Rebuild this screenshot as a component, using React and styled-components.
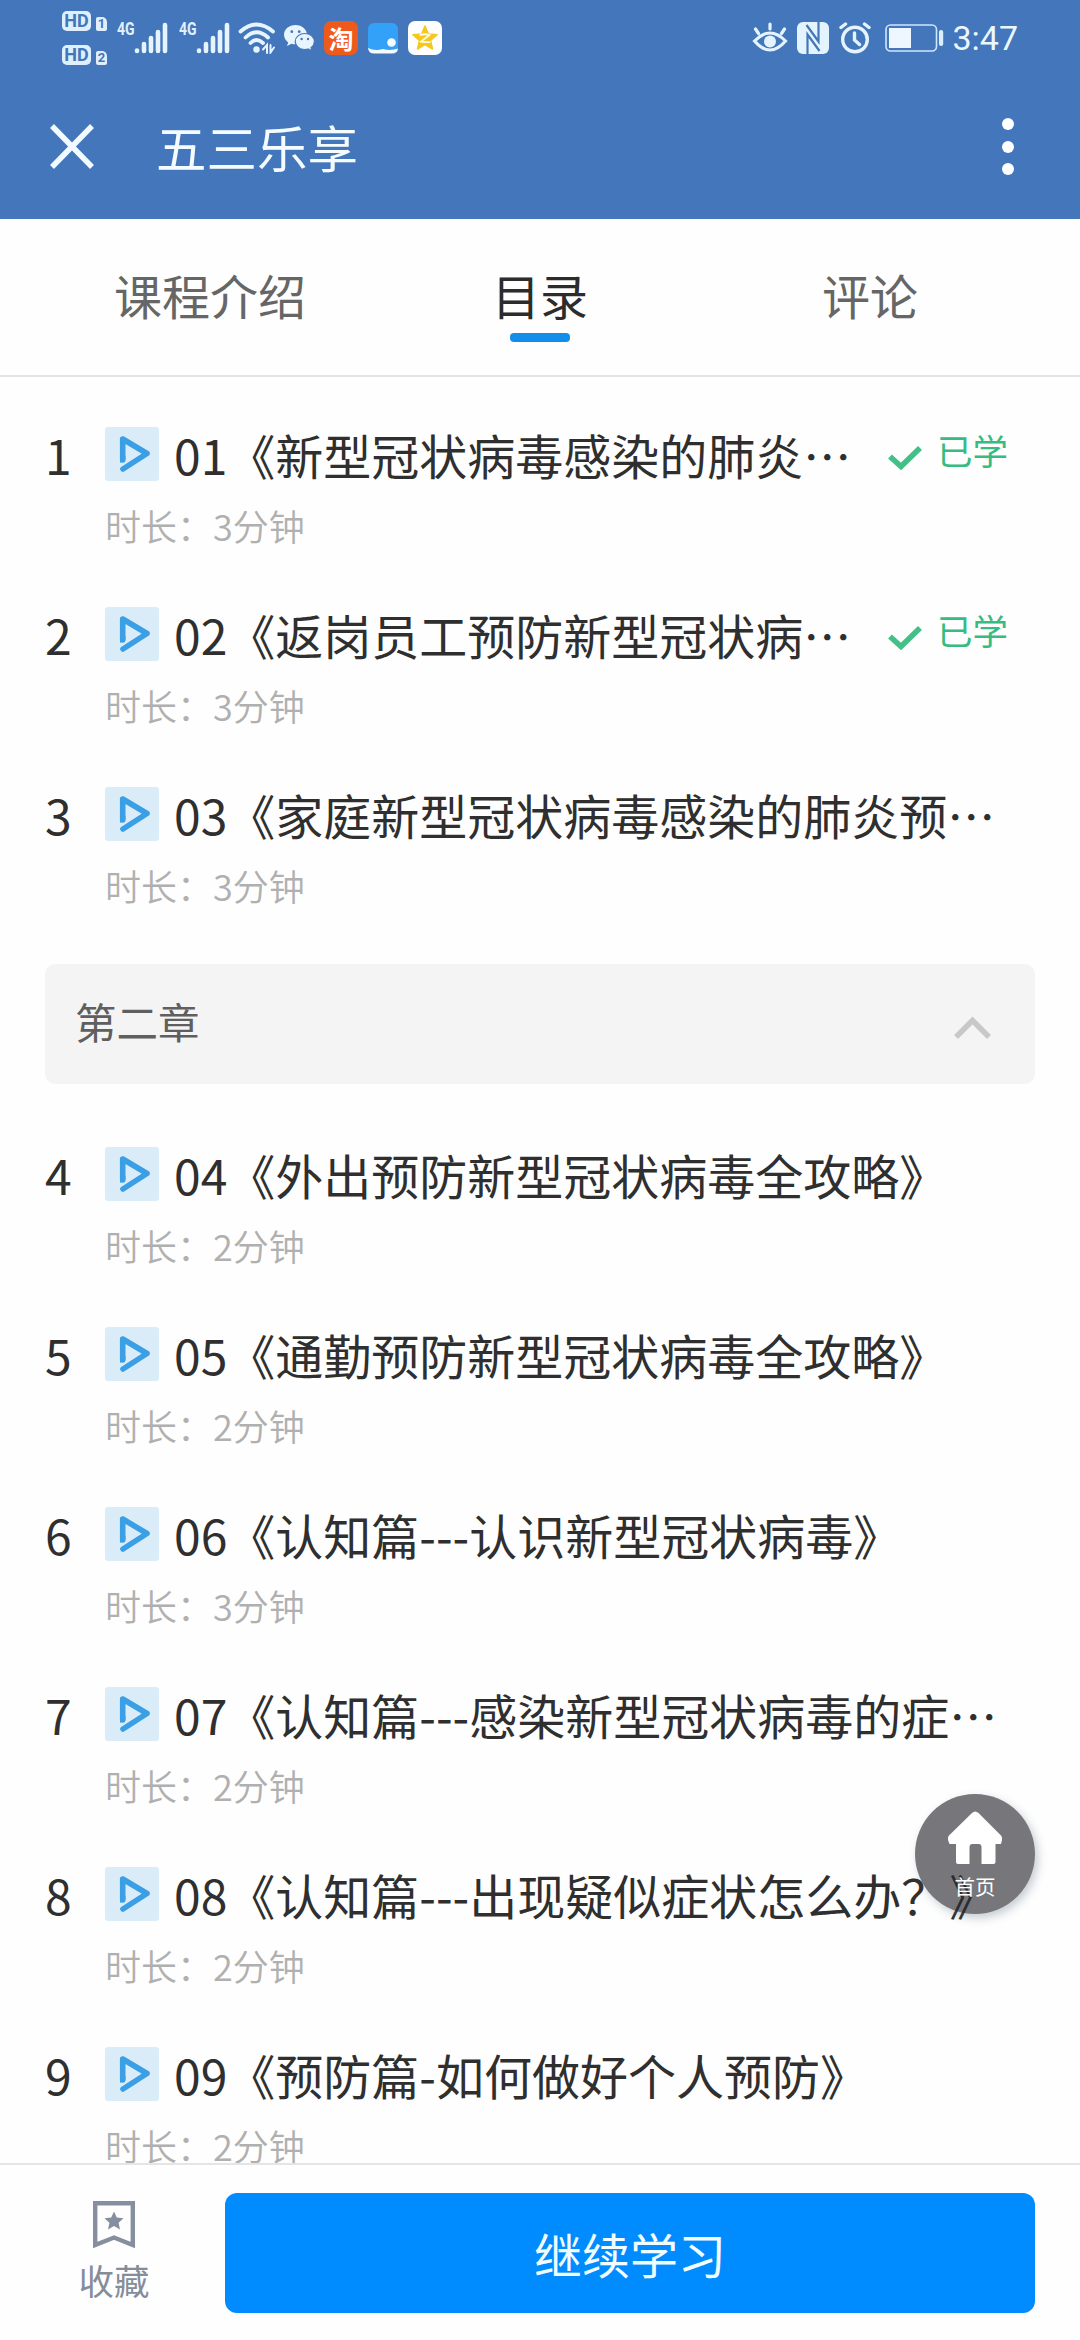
import { useState } from "react";
import styled, { createGlobalStyle } from "styled-components";

const GlobalStyle = createGlobalStyle`
  * {
    box-sizing: border-box;
  }

  body {
    margin: 0;
    background: #fefefe;
    font-family: "Noto Sans CJK SC", "Noto Sans", sans-serif;
    text-spacing-trim: space-all;
  }
`;

const Page = styled.div`
  position: relative;
  display: flex;
  flex-direction: column;
  width: 1080px;
  height: 2340px;
  overflow: hidden;
  background: #fefefe;
`;

const Header = styled.header`
  flex: none;
  height: 219px;
  color: #f4fcff;
  background: #4376ba;
`;

const StatusBar = styled.div`
  display: flex;
  justify-content: space-between;
  height: 76px;
  padding: 0 62px;
`;

const StatusGroup = styled.div`
  display: flex;
  align-items: center;
  height: 76px;
`;

const StatusIcon = styled.svg`
  flex: none;
  display: block;
  margin-left: ${({ $gap }) => $gap || 0}px;
`;

const HdColumn = styled.div`
  display: flex;
  flex-direction: column;
  gap: 14px;
`;

const HdRow = styled.div`
  display: flex;
  align-items: flex-end;
  gap: 5px;
`;

const HdBadge = styled.span`
  width: ${({ $small }) => ($small ? 11 : 29)}px;
  height: ${({ $small }) => ($small ? 14 : 20)}px;
  border-radius: ${({ $small }) => ($small ? "2px 5px 2px 2px" : "5px")};
  background: #dfefff;
  color: #4376ba;
  font: bold ${({ $small }) => ($small ? 13 : 18)}px / ${({ $small }) => ($small ? 14 : 20)}px Roboto, sans-serif;
  text-align: center;
`;

const NetLabel = styled.span`
  align-self: flex-start;
  width: 18px;
  margin: 19px 0 0 ${({ $gap }) => $gap}px;
  color: #dff0ff;
  font: bold 19px / 20px Roboto, sans-serif;
  white-space: nowrap;

  span {
    display: inline-block;
    transform: scaleX(0.74);
    transform-origin: left;
  }
`;

const AppTile = styled.span`
  display: flex;
  align-items: center;
  justify-content: center;
  width: 34px;
  height: 34px;
  margin-left: ${({ $gap }) => $gap}px;
  border-radius: 7px;
  background: ${({ $bg }) => $bg};
  color: #fff;
  font-size: 25px;
  font-weight: bold;
  line-height: 34px;
`;

const Clock = styled.span`
  margin-left: 8px;
  color: #eaf7ff;
  font: 34px / 40px Roboto, sans-serif;
`;

const Toolbar = styled.div`
  display: flex;
  align-items: center;
  height: 143px;
  padding: 0 66px 4px 50px;
`;

const Title = styled.h1`
  flex: 1;
  margin: 0 0 0 62px;
  font-size: 50.5px;
  font-weight: 400;
  line-height: 72px;
`;

const MenuDots = styled.button`
  display: flex;
  flex-direction: column;
  gap: 10.5px;
  padding: 2px 0 0;
  border: none;
  background: none;
  cursor: pointer;

  i {
    width: 12px;
    height: 12px;
    border-radius: 50%;
    background: #fff;
  }
`;

const Tabs = styled.nav`
  flex: none;
  display: grid;
  grid-template-columns: repeat(3, 1fr);
  height: 158px;
  padding: 39px 45px 0;
  border-bottom: 2px solid #e5e5e5;
`;

const Tab = styled.div`
  display: flex;
  flex-direction: column;
  align-items: center;
  color: ${({ $active }) => ($active ? "#2c2c2c" : "#666")};
  font-size: 48px;
  line-height: 72px;
  cursor: pointer;

  &::after {
    content: "";
    width: 60px;
    height: 9px;
    margin-top: 3px;
    border-radius: 4px;
    background: ${({ $active }) => ($active ? "#108ee9" : "transparent")};
  }
`;

const List = styled.main`
  flex: 1;
  min-height: 0;
  overflow: hidden;
  padding: 21px 45px 0;
`;

const Lesson = styled.div`
  display: grid;
  grid-template-columns: 60px 1fr;
  align-content: start;
  height: 180px;
  padding: 23px 27px 0 0;
`;

const LessonNo = styled.span`
  color: #2f2f2f;
  font-size: 48px;
  line-height: 66px;
`;

const LessonHead = styled.div`
  display: flex;
  align-items: center;
  min-width: 0;
  height: 66px;
`;

const LessonTitle = styled.span`
  flex: 1;
  min-width: 0;
  margin-left: 15px;
  color: #2f2f2f;
  font-size: 48px;
  line-height: 66px;
  white-space: nowrap;
`;

const Learned = styled.span`
  flex: none;
  display: flex;
  align-items: center;
  gap: 15px;
  margin-left: 24px;
  color: #36bb80;
  font-size: 35.5px;
  line-height: 50px;
  padding-bottom: 8px;

  svg {
    margin-top: 15px;
  }
`;

const Duration = styled.span`
  grid-column: 2;
  margin-top: 12px;
  color: #b0b0b0;
  font-size: 36px;
  font-weight: 350;
  line-height: 52px;
`;

const Chapter = styled.div`
  display: flex;
  align-items: center;
  justify-content: space-between;
  height: 120px;
  margin: 26px 0 34px;
  padding: 0 44px 0 30px;
  border-radius: 10px;
  background: #f4f4f4;
  color: #5f5f5f;
  font-size: 41.5px;
  line-height: 60px;
  cursor: pointer;

  span {
    padding-bottom: 6px;
  }

  svg {
    margin-top: 7px;
  }
`;

const Footer = styled.footer`
  flex: none;
  display: flex;
  height: 177px;
  padding: 28px 45px 0;
  border-top: 2px solid #e5e5e5;
`;

const Favorite = styled.div`
  display: flex;
  flex-direction: column;
  align-items: center;
  width: 138px;
  padding-top: 8px;
  color: #858d9b;
  font-size: 35.5px;
  line-height: 50px;
  cursor: pointer;

  svg {
    margin-bottom: 6px;
  }
`;

const ContinueBtn = styled.button`
  flex: 1;
  height: 120px;
  margin-left: 42px;
  padding: 0;
  border: none;
  border-radius: 12px;
  background: #008cff;
  color: #f2fdff;
  font-family: inherit;
  font-size: 48px;
  line-height: 72px;
  cursor: pointer;
`;

const HomeBtn = styled.div`
  position: absolute;
  right: 45px;
  bottom: 426px;
  display: flex;
  flex-direction: column;
  align-items: center;
  width: 120px;
  height: 120px;
  padding-top: 17px;
  border-radius: 50%;
  background: rgba(40, 40, 48, 0.64);
  box-shadow: 3px 4px 10px rgba(80, 100, 120, 0.32);
  color: #fff;
  font-size: 20.5px;
  line-height: 28px;
  cursor: pointer;

  svg {
    margin-bottom: 7px;
  }
`;

const SignalIcon = () => (
  <StatusIcon width="34" height="32" viewBox="0 0 34 32" $gap={-1} fill="none" stroke="#e6f4ff" strokeWidth="4.6" strokeLinecap="round">
    <path d="M3 28.5v.5M10 22v7M17 16v13M24 10v19M31 3v26" />
  </StatusIcon>
);

const WifiIcon = () => (
  <StatusIcon width="38" height="32" viewBox="0 0 38 32" $gap={8} fill="none" stroke="#e6f4ff" strokeWidth="3.8" strokeLinecap="round">
    <path d="M2.5 9.5Q18.5-4.5 35 9.5M7.5 15.5Q18.5 5 30 15.5M12.5 21Q18.5 15 25 21" />
    <circle cx="18.5" cy="27.5" r="3.2" fill="#e6f4ff" stroke="none" />
    <path d="M25 27.5l4-4.500v8M32.500 23v7.500l3.500-5" strokeWidth="2" />
  </StatusIcon>
);

const WechatIcon = () => (
  <StatusIcon width="32" height="28" viewBox="0 0 32 28" $gap={7}>
    <path fill="#e8f4ff" d="M12.5 1C6 1 1 5.3 1 10.8c0 3.1 1.6 5.8 4.2 7.6L4 22l4.500-2.300c1.300.4 2.600.6 4 .6C19 20.300 24 16 24 10.800S19 1 12.500 1z" />
    <path fill="#e8f4ff" stroke="#4376ba" strokeWidth="1.2" d="M21.800 9.500c-5.400 0-9.600 3.600-9.600 8s4.200 8 9.600 8c1.200 0 2.300-.2 3.300-.5l3.900 2-1-3.300c2.100-1.500 3.400-3.700 3.400-6.200 0-4.400-4.200-8-9.600-8z" />
    <g fill="#4376ba">
      <circle cx="8.8" cy="7.7" r="1.4" />
      <circle cx="16.2" cy="7.7" r="1.4" />
      <circle cx="18.6" cy="15" r="1.2" />
      <circle cx="25" cy="15" r="1.2" />
    </g>
  </StatusIcon>
);

const BlueAppIcon = () => (
  <StatusIcon width="30" height="32" viewBox="0 0 30 32" $gap={10}>
    <rect y="1" width="30" height="30" rx="6" fill="#34a1f8" />
    <path fill="#f4fcff" d="M0 26q7 3.500 15 1 8 2 15-.5-.5 5-6 5H6q-5.500 0-6-5.500z" />
    <circle cx="23.5" cy="20.5" r="4.3" fill="#f4fcff" />
  </StatusIcon>
);

const StarIcon = () => (
  <svg width="28" height="28" viewBox="0 0 28 28">
    <path fill="#f6c71d" stroke="#f6c71d" strokeWidth="1.5" strokeLinejoin="round" d="M14 2l3.400 8 8.700.8-6.600 5.700 2 8.500-7.500-4.500L6.500 25l2-8.500-6.600-5.700 8.700-.8z" />
    <path fill="none" stroke="#fffbe0" strokeWidth="1.8" d="M8.500 11q5.500-1.500 10 0l-8.500 6.500q5 1.200 9.500.3" />
  </svg>
);

const EyeIcon = () => (
  <StatusIcon width="36" height="32" viewBox="0 0 36 32" fill="none" stroke="#e4f4ff" strokeWidth="3.2" strokeLinecap="round">
    <path d="M2.500 19Q18 3 33.500 19 18 37 2.500 19zM18 2v5M3.500 7l3 4.500M32.500 7l-3 4.500" />
    <circle cx="18" cy="19.5" r="6" fill="#e4f4ff" stroke="none" />
  </StatusIcon>
);

const NfcIcon = () => (
  <StatusIcon width="32" height="32" viewBox="0 0 32 32" $gap={9}>
    <rect width="32" height="32" rx="6" fill="#e4f4ff" />
    <path d="M10.500 32V12.500L22.500 29M21.500 0v19.500L9.500 3" fill="none" stroke="#4376ba" strokeWidth="2.2" />
  </StatusIcon>
);

const AlarmIcon = () => (
  <StatusIcon width="32" height="32" viewBox="0 0 32 32" $gap={10} fill="none" stroke="#e4f4ff" strokeWidth="3.4" strokeLinecap="round">
    <circle cx="16" cy="17.5" r="12.3" />
    <path d="M2 5.500L6.500 2M30 5.500L25.500 2M15.500 11v7l5 4.500" />
  </StatusIcon>
);

const BatteryIcon = () => (
  <StatusIcon width="59" height="28" viewBox="0 0 59 28" $gap={14}>
    <rect x="1" y="1" width="50.5" height="26" rx="4.5" fill="none" stroke="#cfe6fb" strokeWidth="1.6" />
    <rect x="4" y="4" width="22" height="20" fill="#eef6ff" />
    <rect x="54" y="6" width="4.2" height="16" rx="2" fill="#dbeefe" />
  </StatusIcon>
);

const CloseIcon = () => (
  <svg width="44" height="46" viewBox="0 0 44 46" stroke="#f0faff" strokeWidth="5.5">
    <path d="M2 3L42 44M42 3L2 44" />
  </svg>
);

const PlayIcon = () => (
  <svg width="54" height="54" viewBox="0 0 54 54">
    <rect width="54" height="54" rx="3" fill="#dbecf9" />
    <path d="M17.700 33V12L42 26.500 18 42" fill="none" stroke="#3a9fe4" strokeWidth="5.6" strokeLinecap="round" strokeLinejoin="round" />
    <path d="M15 31v5l5.500-3.500V29z" fill="#3a9fe4" />
  </svg>
);

const CheckIcon = () => (
  <svg width="34" height="26" viewBox="0 0 34 26" fill="none" stroke="#42c088" strokeWidth="5.6">
    <path d="M2 11.500L13 21.500 32 3" />
  </svg>
);

const ChevronIcon = () => (
  <svg width="37" height="24" viewBox="0 0 37 24" fill="none" stroke="#c8c8c8" strokeWidth="5.5">
    <path d="M2 21L18.500 4.500 35 21" />
  </svg>
);

const BookmarkIcon = () => (
  <svg width="42" height="48" viewBox="0 0 42 48">
    <path d="M2.200 2.200h37.600v41.800L21 36.500 2.200 44z" fill="none" stroke="#858fa0" strokeWidth="4.4" />
    <path fill="#858fa0" d="M21 10.500l2.800 6 6.700.8-4.900 4.500 1.400 6.700-6-3.400-6 3.400 1.400-6.700-4.900-4.500 6.700-.8z" />
  </svg>
);

const HomeIcon = () => (
  <svg width="54" height="54" viewBox="0 0 54 54" fill="#fff">
    <path d="M24 2q3-3 6.500 0L53 24.500q1.500 2 1 4.500l-1 4h-5.500V51q0 2-2 2H33.500V36q0-3-3-3h-6q-3 0-3 3v17H10q-2 0-2-2V33H1.500L0 29q-.5-2.500 1-4.500z" />
  </svg>
);

const firstLessons = [
  { no: 1, title: "01《新型冠状病毒感染的肺炎…", minutes: 3, learned: true },
  { no: 2, title: "02《返岗员工预防新型冠状病…", minutes: 3, learned: true },
  { no: 3, title: "03《家庭新型冠状病毒感染的肺炎预…", minutes: 3 },
];

const secondLessons = [
  { no: 4, title: "04《外出预防新型冠状病毒全攻略》", minutes: 2 },
  { no: 5, title: "05《通勤预防新型冠状病毒全攻略》", minutes: 2 },
  { no: 6, title: "06《认知篇---认识新型冠状病毒》", minutes: 3 },
  { no: 7, title: "07《认知篇---感染新型冠状病毒的症…", minutes: 2 },
  { no: 8, title: "08《认知篇---出现疑似症状怎么办？》", minutes: 2 },
  { no: 9, title: "09《预防篇-如何做好个人预防》", minutes: 2 },
];

const LessonRow = ({ no, title, minutes, learned }) => (
  <Lesson>
    <LessonNo>{no}</LessonNo>
    <LessonHead>
      <PlayIcon />
      <LessonTitle>{title}</LessonTitle>
      {learned && (
        <Learned>
          <CheckIcon />
          已学
        </Learned>
      )}
    </LessonHead>
    <Duration>时长：{minutes}分钟</Duration>
  </Lesson>
);

const tabs = ["课程介绍", "目录", "评论"];

const App = () => {
  const [tab, setTab] = useState("目录");
  const [open, setOpen] = useState(true);

  return (
    <Page lang="zh-CN">
      <GlobalStyle />
      <Header>
        <StatusBar>
          <StatusGroup>
            <HdColumn>
              <HdRow>
                <HdBadge>HD</HdBadge>
                <HdBadge $small>1</HdBadge>
              </HdRow>
              <HdRow>
                <HdBadge>HD</HdBadge>
                <HdBadge $small>2</HdBadge>
              </HdRow>
            </HdColumn>
            <NetLabel $gap={10}><span>4G</span></NetLabel>
            <SignalIcon />
            <NetLabel $gap={11}><span>4G</span></NetLabel>
            <SignalIcon />
            <WifiIcon />
            <WechatIcon />
            <AppTile $bg="#ee5a1c" $gap={9}>淘</AppTile>
            <BlueAppIcon />
            <AppTile $bg="#fff" $gap={10}><StarIcon /></AppTile>
          </StatusGroup>
          <StatusGroup>
            <EyeIcon />
            <NfcIcon />
            <AlarmIcon />
            <BatteryIcon />
            <Clock>3:47</Clock>
          </StatusGroup>
        </StatusBar>
        <Toolbar>
          <CloseIcon />
          <Title>五三乐享</Title>
          <MenuDots>
            <i />
            <i />
            <i />
          </MenuDots>
        </Toolbar>
      </Header>
      <Tabs>
        {tabs.map((name) => (
          <Tab key={name} $active={name === tab} onClick={() => setTab(name)}>
            {name}
          </Tab>
        ))}
      </Tabs>
      <List>
        {firstLessons.map((lesson) => (
          <LessonRow key={lesson.no} {...lesson} />
        ))}
        <Chapter onClick={() => setOpen(!open)}>
          <span>第二章</span>
          <ChevronIcon />
        </Chapter>
        {open &&
          secondLessons.map((lesson) => (
            <LessonRow key={lesson.no} {...lesson} />
          ))}
      </List>
      <Footer>
        <Favorite>
          <BookmarkIcon />
          收藏
        </Favorite>
        <ContinueBtn>继续学习</ContinueBtn>
      </Footer>
      <HomeBtn>
        <HomeIcon />
        首页
      </HomeBtn>
    </Page>
  );
};

export default App;
